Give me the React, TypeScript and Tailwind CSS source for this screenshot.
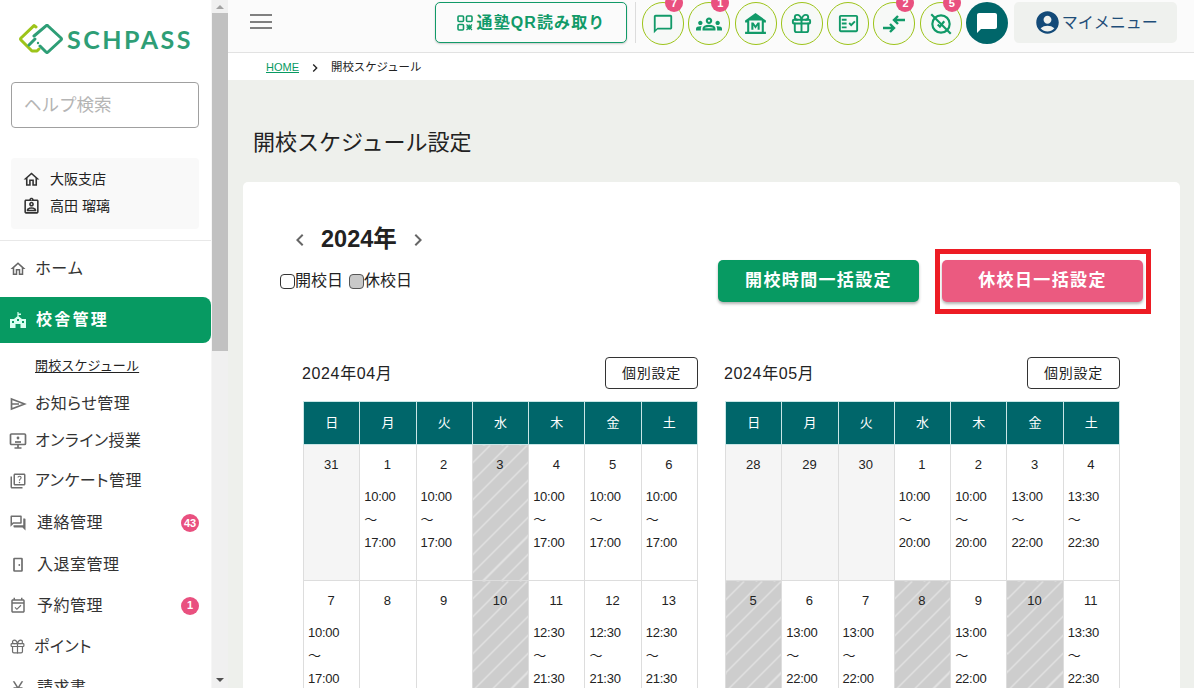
import React from "react";
import {
  MdOutlineChatBubbleOutline, MdOutlineGroups, MdOutlineFactCheck,
  MdAccountCircle, MdChatBubble, MdOutlineHome, MdOutlineQuiz,
  MdOutlineForum, MdOutlineEventAvailable, MdOutlineCurrencyYen, MdOutlineAssignmentInd,
  MdOutlineMuseum, MdChevronLeft, MdChevronRight,
} from "react-icons/md";
import { Gift } from "lucide-react";

const font = "font-['Liberation_Sans','Noto_Sans_CJK_JP',sans-serif]";

const Logo = () => (
  <svg width="44" height="30" viewBox="0 0 44 30" fill="none" strokeWidth="3" strokeLinecap="round" strokeLinejoin="round">
    <path d="M17 3 L15 1.6 L2 14 Q1 15 2 16 L13 27 L18 27 L20 25" stroke="#9dc41a" />
    <path d="M15 12 L27 1.8 Q28 1 29 2 L42 14 Q43 15 42 16 L29 28 Q28 29 27 28 L21 22" stroke="#2e9e76" />
    <path d="M10 21 L16 15" stroke="#2e9e76" />
    <circle cx="19" cy="19" r="1.2" fill="#2e9e76" stroke="none" />
  </svg>
);

const QrIcon = () => (
  <svg width="16" height="16" viewBox="0 0 16 16" fill="none" stroke="#119a68" strokeWidth="1.6">
    <rect x="1" y="1" width="5.5" height="5.5" rx="1" />
    <rect x="9.5" y="1" width="5.5" height="5.5" rx="1" />
    <rect x="1" y="9.5" width="5.5" height="5.5" rx="1" />
    <path d="M9.5 9.5l5.5 5.5M15 9.5l-5.5 5.5M12.2 9.5v5.5M9.5 12.2h5.5" strokeWidth="1.2" />
  </svg>
);

const ArrowsIn = () => (
  <svg width="24" height="24" viewBox="0 0 24 24" fill="none" stroke="#119a68" strokeWidth="2.4">
    <path d="M1 16h10M8 12l4 4-4 4" />
    <path d="M23 8H13M16 4l-4 4 4 4" />
  </svg>
);

const ClockOff = () => (
  <svg width="26" height="26" viewBox="0 0 24 24" fill="none" stroke="#119a68" strokeWidth="2">
    <circle cx="12" cy="12" r="8" />
    <path d="M3 3l18 18" />
    <path d="M9 12.5l2 2 4-5" />
  </svg>
);

const School = () => (
  <svg width="18" height="18" viewBox="0 0 18 18" fill="#d8fff0">
    <path d="M8.4 1h1.2v1.5h2.4v1.5H9.6v1.2L13 8h4v9h-5.5v-4h-5v4H1V8h4l3.4-2.8z" />
    <rect x="3" y="10" width="2" height="2" fill="#079a62" />
    <rect x="13" y="10" width="2" height="2" fill="#079a62" />
    <rect x="8" y="8" width="2" height="2" fill="#079a62" />
  </svg>
);

const SendOutline = () => (
  <svg width="18" height="18" viewBox="0 0 18 18" fill="none" stroke="currentColor" strokeWidth="1.7">
    <path d="M2.5 4 L15.5 9 L2.5 14 Z M2.5 9 H10" />
  </svg>
);

const Screen = () => (
  <svg width="18" height="18" viewBox="0 0 18 18" fill="none" stroke="currentColor" strokeWidth="1.7">
    <rect x="1.5" y="2" width="15" height="10.5" rx="1" />
    <path d="M9 12.5v3M5.5 16h7" />
    <circle cx="9" cy="6" r="1.4" fill="currentColor" stroke="none" />
    <path d="M6 10h6" />
  </svg>
);

const Door = () => (
  <svg width="18" height="18" viewBox="0 0 18 18" fill="none" stroke="currentColor" strokeWidth="1.7">
    <rect x="5" y="2.5" width="8" height="12.5" rx="0.5" />
    <circle cx="10.3" cy="9" r="0.9" fill="currentColor" stroke="none" />
  </svg>
);

const circles = [
  { icon: <MdOutlineChatBubbleOutline size={22} color="#119a68" />, badge: "7" },
  { icon: <MdOutlineGroups size={26} color="#119a68" />, badge: "1" },
  { icon: <MdOutlineMuseum size={25} color="#119a68" /> },
  { icon: <Gift size={23} color="#119a68" strokeWidth={2} /> },
  { icon: <MdOutlineFactCheck size={23} color="#119a68" /> },
  { icon: <ArrowsIn />, badge: "2" },
  { icon: <ClockOff />, badge: "5" },
];

const nav = [
  { label: "お知らせ管理", icon: <SendOutline />, h: "h-[36px]" },
  { label: "オンライン授業", icon: <Screen />, h: "h-[38px]" },
  { label: "アンケート管理", icon: <MdOutlineQuiz size={18} />, h: "h-[42px]" },
  { label: "連絡管理", icon: <MdOutlineForum size={18} />, h: "h-[42px]", badge: "43", px: "ml-[2px]" },
  { label: "入退室管理", icon: <Door />, h: "h-[41px]", px: "ml-[2px]" },
  { label: "予約管理", icon: <MdOutlineEventAvailable size={18} />, h: "h-[41px]", badge: "1", px: "ml-[2px]" },
  { label: "ポイント", icon: <Gift size={17} strokeWidth={1.7} />, h: "h-[41px]" },
  { label: "請求書", icon: <MdOutlineCurrencyYen size={18} />, h: "h-[42px]", px: "ml-[2px]" },
];

type Day = { d: number; t?: [string, string]; off?: boolean; prev?: boolean };

const T = (a: string, b: string): [string, string] => [a, b];

const april: Day[][] = [
  [
    { d: 31, prev: true }, { d: 1, t: T("10:00", "17:00") }, { d: 2, t: T("10:00", "17:00") }, { d: 3, off: true },
    { d: 4, t: T("10:00", "17:00") }, { d: 5, t: T("10:00", "17:00") }, { d: 6, t: T("10:00", "17:00") },
  ],
  [
    { d: 7, t: T("10:00", "17:00") }, { d: 8 }, { d: 9 }, { d: 10, off: true },
    { d: 11, t: T("12:30", "21:30") }, { d: 12, t: T("12:30", "21:30") }, { d: 13, t: T("12:30", "21:30") },
  ],
];

const may: Day[][] = [
  [
    { d: 28, prev: true }, { d: 29, prev: true }, { d: 30, prev: true }, { d: 1, t: T("10:00", "20:00") },
    { d: 2, t: T("10:00", "20:00") }, { d: 3, t: T("13:00", "22:00") }, { d: 4, t: T("13:30", "22:30") },
  ],
  [
    { d: 5, off: true }, { d: 6, t: T("13:00", "22:00") }, { d: 7, t: T("13:00", "22:00") }, { d: 8, off: true },
    { d: 9, t: T("13:00", "22:00") }, { d: 10, off: true }, { d: 11, t: T("13:30", "22:30") },
  ],
];

const week = ["日", "月", "火", "水", "木", "金", "土"];

const stripe = "bg-[repeating-linear-gradient(135deg,#cdcdcd_0,#cdcdcd_11.5px,#e2e2e2_11.5px,#e2e2e2_13px)]";

function Calendar({ title, rows }: { title: string; rows: Day[][] }) {
  return (
    <div className="w-[396px]">
      <div className="flex items-center justify-between w-[395px] h-[32px] mb-[12px]">
        <span className="text-[16px] text-[#222] -ml-[1px] mt-[2px] tracking-[0.04em]">{title}</span>
        <button className="w-[93px] h-[32px] border border-[#333] rounded-[4px] bg-white text-[14px] text-[#222] tracking-[0.05em]">個別設定</button>
      </div>
      <table className="table-fixed w-[395px] border-collapse text-[13px] text-[#222]">
        <thead>
          <tr>
            {week.map((w) => (
              <th key={w} className="h-[43px] bg-[#00666a] border border-[#c9e6e6] font-normal text-white text-[13px]">{w}</th>
            ))}
          </tr>
        </thead>
        <tbody>
          {rows.map((r, i) => (
            <tr key={i}>
              {r.map((c, j) => (
                <td
                  key={j}
                  className={
                    "h-[136px] border border-[#dddddd] align-top p-0 " +
                    (c.off ? stripe : c.prev ? "bg-[#f5f5f5]" : "bg-white")
                  }
                >
                  <div className="text-center leading-[23px] pt-[8px] mb-[9px] -ml-[1px]">{c.d}</div>
                  {c.t && (
                    <div className="pl-[4px] leading-[23px] tracking-[-0.02em]">
                      <div>{c.t[0]}</div>
                      <div>〜</div>
                      <div>{c.t[1]}</div>
                    </div>
                  )}
                </td>
              ))}
            </tr>
          ))}
        </tbody>
      </table>
    </div>
  );
}

export default function App() {
  return (
    <div className={"flex w-[1194px] h-[688px] overflow-hidden bg-[#eef0ec] " + font}>
      {/* sidebar */}
      <aside className="w-[211px] shrink-0 h-full bg-white overflow-hidden">
        <div className="h-[82px] pl-[19px] pt-[24px] flex items-start gap-[4px]">
          <Logo />
          <span className="font-['Lato',sans-serif] font-bold text-[25px] leading-[30px] tracking-[0.1em] text-[#2e9e76]">SCHPASS</span>
        </div>
        <div className="mx-[11px] w-[188px] h-[46px] border border-[#a0a0a0] rounded-[4px] pl-[12px] flex items-center text-[17.5px] text-[#b5b5b5]">ヘルプ検索</div>
        <div className="mt-[30px] mx-[11px] w-[188px] h-[71px] bg-[#f9f9f9] rounded-[4px] pl-[11px] pt-[8px] text-[14px] text-[#222]">
          <div className="flex items-center gap-[9px] h-[27px]"><MdOutlineHome size={19} color="#333" />大阪支店</div>
          <div className="flex items-center gap-[9px] h-[27px]"><MdOutlineAssignmentInd size={19} color="#333" />高田 瑠璃</div>
        </div>
        <div className="mt-[11px] border-t border-[#e8e8e8] pt-[1px]">
          <div className="h-[55px] flex items-center pl-[9px] pb-[2px] gap-[8px] text-[16px] text-[#333]">
            <MdOutlineHome size={18} color="#666" /><span className="tracking-[0.02em]">ホーム</span>
          </div>
          <div className="h-[46px] bg-[#079a62] rounded-r-[8px] flex items-center pl-[9px] gap-[9px] text-white font-bold text-[16px] tracking-[0.14em]">
            <School />校舎管理
          </div>
          <div className="h-[41px] pl-[35px] flex items-center text-[13px] text-[#222] pt-[4px]">
            <span className="underline underline-offset-2 tracking-[0.01em]">開校スケジュール</span>
          </div>
          <div className="pt-[2px]">
            {nav.map((n) => (
              <div key={n.label} className={n.h + " relative flex items-center pl-[9px] gap-[8px] text-[16px] text-[#333] pr-[12px]"}>
                <span className="text-[#6e6e6e] shrink-0">{n.icon}</span>
                <span className={(n.px ?? "") + " tracking-[0.03em] [font-feature-settings:'palt']"}>{n.label}</span>
                {n.badge && (
                  <span className="ml-auto w-[18px] h-[18px] rounded-full bg-[#e9507f] text-white text-[11px] font-bold flex items-center justify-center">{n.badge}</span>
                )}
              </div>
            ))}
          </div>
        </div>
      </aside>

      {/* scrollbar */}
      <div className="w-[17px] shrink-0 h-full bg-[#f0f0f0] flex flex-col items-center border-l border-[#f6f6f6]">
        <div className="h-[13px] w-full flex items-center justify-center">
          <div className="w-0 h-0 border-x-[4px] border-x-transparent border-b-[4px] border-b-[#a3a3a3]" />
        </div>
        <div className="w-full h-[338px] bg-[#c1c1c1]" />
        <div className="flex-1" />
        <div className="h-[17px] w-full flex items-center justify-center">
          <div className="w-0 h-0 border-x-[4px] border-x-transparent border-t-[4px] border-t-[#505050]" />
        </div>
      </div>

      {/* main */}
      <main className="flex-1 min-w-0 h-full flex flex-col overflow-hidden">
        <header className="h-[53px] shrink-0 bg-[#fbfbfb] border-b border-[#e2e2e2] flex items-start pt-[2px]">
          <div className="w-[22px] ml-[22px] mt-[12px] flex flex-col gap-[4.5px]">
            <div className="h-[2px] bg-[#808080]" /><div className="h-[2px] bg-[#808080]" /><div className="h-[2px] bg-[#808080]" />
          </div>
          <button className="ml-[163px] w-[192px] h-[41px] border border-[#119a68] rounded-[5px] bg-[#fbfbfb] shadow-[0_1px_2px_rgba(0,0,0,0.2)] flex items-center justify-center gap-[4px] text-[#119a68] font-bold text-[16px] tracking-[0.07em]">
            <QrIcon />通塾QR読み取り
          </button>
          <div className="ml-[8px] w-px h-[41px] bg-[#dcdcdc]" />
          <div className="ml-[6px] flex gap-[4.3px]">
            {circles.map((c, i) => (
              <div key={i} className="relative w-[42px] h-[43px] rounded-full border border-[#9dc41a] flex items-center justify-center bg-[#f7f9f7]">
                {c.icon}
                {c.badge && (
                  <span className="absolute -top-[9px] right-0 w-[18px] h-[18px] rounded-full bg-[#e9507f] text-white text-[11px] font-bold flex items-center justify-center">{c.badge}</span>
                )}
              </div>
            ))}
          </div>
          <div className="ml-[4px] w-[42px] h-[42px] rounded-full bg-[#00666a] flex items-center justify-center">
            <MdChatBubble size={24} color="#fff" />
          </div>
          <div className="ml-[6px] w-[163px] h-[41px] rounded-[5px] bg-[#eff1ee] flex items-center pl-[20px] gap-[1px] text-[#1f4e79] text-[16px]">
            <MdAccountCircle size={27} color="#134a78" />マイメニュー
          </div>
        </header>
        <div className="h-[27px] shrink-0 bg-white flex items-center pl-[38px] pt-[2px] text-[11.4px] text-[#222]">
          <span className="text-[#079a62] underline text-[11px]">HOME</span>
          <span className="ml-[8px]"><MdChevronRight size={16} /></span>
          <span className="ml-[8px]">開校スケジュール</span>
        </div>
        <h1 className="ml-[25px] mt-[47px] text-[22px] leading-[32px] font-normal text-[#222] h-[55px] shrink-0">開校スケジュール設定</h1>
        <section className="relative ml-[15px] w-[937px] flex-1 bg-white rounded-t-[5px] pl-[37px] pt-[42px]">
          <div className="flex items-start justify-between pr-[37px] h-[100px]">
            <div>
              <div className="flex items-center h-[32px] pl-[8px]">
                <MdChevronLeft size={24} color="#666" />
                <span className="ml-[9px] font-bold text-[23.5px] text-[#222]">2024年</span>
                <span className="ml-[9px]"><MdChevronRight size={24} color="#666" /></span>
              </div>
              <div className="mt-[15px] flex items-center text-[16px] text-[#222] h-[20px]">
                <span className="w-[15px] h-[15px] border border-[#333] rounded-[4px]" />
                <span>開校日</span>
                <span className="ml-[6px] w-[15px] h-[15px] border border-[#555] rounded-[4px] bg-[#c9c9c9]" />
                <span>休校日</span>
              </div>
            </div>
            <div className="flex gap-[23px] pt-[36px]">
              <button className="w-[201px] h-[42px] rounded-[5px] bg-[#079a62] text-white font-bold text-[17px] tracking-[0.08em] shadow-[0_2px_3px_rgba(0,0,0,0.3)]">開校時間一括設定</button>
              <button className="w-[201px] h-[42px] rounded-[5px] bg-[#eb5a80] text-white font-bold text-[17px] tracking-[0.08em] shadow-[0_2px_3px_rgba(0,0,0,0.3)]">休校日一括設定</button>
            </div>
          </div>
          <div className="absolute left-[692px] top-[67px] w-[216px] h-[65px] border-[5px] border-[#ed1c24]" />
          <div className="mt-[33px] ml-[23px] flex gap-[26px]">
            <Calendar title="2024年04月" rows={april} />
            <Calendar title="2024年05月" rows={may} />
          </div>
        </section>
      </main>
    </div>
  );
}
